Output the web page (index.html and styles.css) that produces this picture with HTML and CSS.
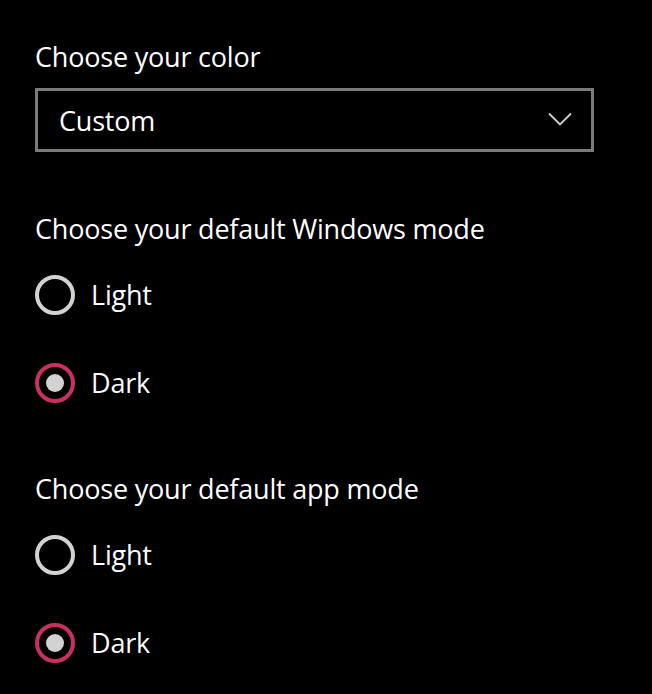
FILE: index.html
```html
<!DOCTYPE html>
<html lang="en">
<head>
<meta charset="utf-8">
<title>Colors</title>
<link rel="stylesheet" href="styles.css">
</head>
<body>
<main class="page">
  <h2 class="heading first">Choose your color</h2>
  <div class="dropdown">
    <span class="dropdown-value">Custom</span>
    <svg class="chevron" width="24" height="14" viewBox="0 0 24 14" aria-hidden="true">
      <polyline points="1,1.5 12,12.5 23,1.5" fill="none" stroke="#d0d0d0" stroke-width="1.8"/>
    </svg>
  </div>

  <h2 class="heading section">Choose your default Windows mode</h2>
  <div class="radio-group">
    <label class="radio"><span class="radio-circle"></span><span class="radio-label">Light</span></label>
    <label class="radio"><span class="radio-circle checked"></span><span class="radio-label">Dark</span></label>
  </div>

  <h2 class="heading section2">Choose your default app mode</h2>
  <div class="radio-group">
    <label class="radio"><span class="radio-circle"></span><span class="radio-label">Light</span></label>
    <label class="radio"><span class="radio-circle checked"></span><span class="radio-label">Dark</span></label>
  </div>
</main>
</body>
</html>
```

FILE: styles.css
```css
* { box-sizing: border-box; }
html, body {
  margin: 0;
  padding: 0;
  background: #000;
}
body {
  font-family: "Open Sans", "Noto Sans", sans-serif;
  color: #ffffff;
}
.page {
  padding: 39px 0 0 35px;
  width: 652px;
}
.heading {
  margin: 0;
  font-size: 27px;
  font-weight: 400;
  line-height: 36px;
  letter-spacing: -0.2px;
}
.dropdown {
  margin-top: 13px;
  width: 559px;
  height: 64px;
  border: 3px solid #7a7a7a;
  padding: 11px 19px 11px 21px;
  display: flex;
  align-items: center;
  justify-content: space-between;
}
.dropdown-value {
  font-size: 27px;
  line-height: 36px;
  letter-spacing: -0.2px;
  position: relative;
  top: 1px;
}
.chevron {
  display: block;
  margin-top: -2px;
}
.section {
  margin-top: 59px;
}
.section2 {
  margin-top: 68px;
}
.radio-group {
  margin-top: 28px;
  display: flex;
  flex-direction: column;
  gap: 48px;
}
.radio {
  display: flex;
  align-items: center;
  gap: 16px;
  height: 40px;
}
.radio-circle {
  width: 40px;
  height: 40px;
  border-radius: 50%;
  border: 4px solid #d2d2d2;
  display: flex;
  align-items: center;
  justify-content: center;
  flex: none;
}
.radio-circle.checked {
  border-color: #c8305f;
}
.radio-circle.checked::after {
  content: "";
  width: 18px;
  height: 18px;
  border-radius: 50%;
  background: #d2d2d2;
}
.radio-label {
  font-size: 27px;
  line-height: 36px;
  letter-spacing: -0.2px;
}
```
